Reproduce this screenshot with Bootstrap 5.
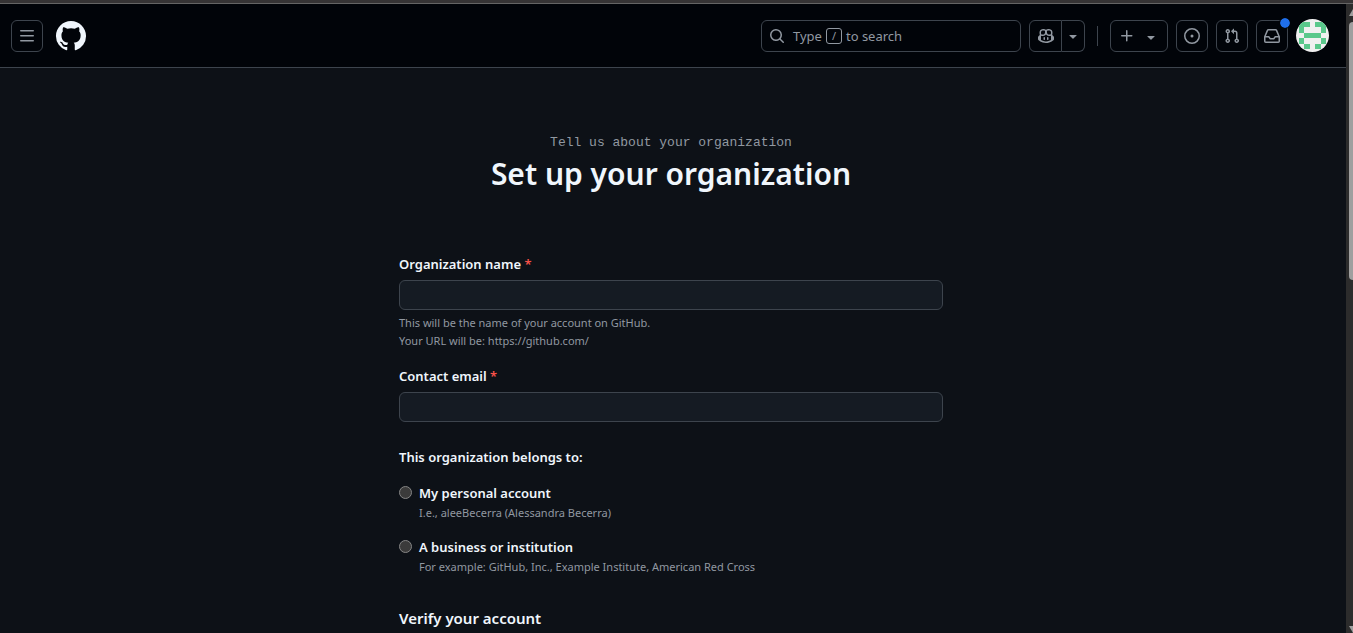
<!DOCTYPE html>
<html lang="en">
<head>
<meta charset="utf-8">
<meta name="viewport" content="width=device-width, initial-scale=1">
<title>Set up your organization</title>
<link href="https://cdn.jsdelivr.net/npm/bootstrap@5.3.0/dist/css/bootstrap.min.css" rel="stylesheet">
<style>
:root { --line: #3d444d; --muted: #9198a1; --fg: #f0f6fc; }
body { background: #0d1117; color: var(--fg); font: 14px/20px "Noto Sans", "Open Sans", sans-serif; }
svg { display: block; fill: currentColor; }
.window-edge { height: 4px; background: #363435; border-bottom: 1px solid #656565; }
.topbar { height: 64px; background: #010409; border-bottom: 1px solid var(--line); padding: 0 17px 0 11px; gap: 8px; }
.tool { height: 32px; min-width: 32px; padding: 0; border: 1px solid var(--line); border-radius: 6px; background: transparent; color: var(--muted); display: flex; align-items: center; justify-content: center; }
.search { width: 260px; padding: 0 7px; justify-content: flex-start; font-size: 13px; }
.slash { width: 16px; height: 16px; border: 1px solid var(--muted); border-radius: 3px; margin: 0 4px; font-size: 11px; line-height: 14px; text-align: center; }
.copilot .tool:first-child { border-radius: 6px 0 0 6px; width: 33px; }
.copilot .tool:last-child { border-radius: 0 6px 6px 0; border-left: 0; min-width: 23px; }
.divider { width: 1px; height: 20px; background: var(--line); margin: 0 4px; }
.create { width: 58px; gap: 8px; }
.dot { width: 10px; height: 10px; top: -3px; right: -3px; border-radius: 50%; background: #1f6feb; outline: 1px solid #010409; }
.avatar { width: 33px; height: 33px; border-radius: 50%; overflow: hidden; }
.setup { max-width: 544px; padding-top: 64px; }
.eyebrow { font: 13px/21px "Liberation Mono", monospace; color: var(--muted); }
h1 { font-size: 30px; line-height: 42px; font-weight: 600; margin-bottom: 59px; }
.field-label { display: block; font-size: 13px; line-height: 21px; font-weight: 600; margin-bottom: 5px; }
.required { color: #f85149; }
.text-field { height: 30px; background: #151b23; border: 1px solid var(--line); border-radius: 6px; color: var(--fg); padding: 4px 12px; }
.text-field:focus { background: #151b23; color: var(--fg); }
.hint { font-size: 11px; line-height: 18px; color: var(--muted); }
.owner { margin-top: 25px; }
.owner legend { margin-bottom: 15px; }
.choice { gap: 7px; margin-bottom: 15px; }
.choice input { appearance: none; width: 13px; height: 13px; flex: none; margin: 3px 0 0; border: 1px solid #858585; border-radius: 50%; background: #3b3b3b; }
.choice input:checked { background: #4493f8; }
.choice label { display: block; font-size: 13px; line-height: 21px; font-weight: 600; }
h2 { font-size: 15px; line-height: 22px; font-weight: 600; margin: 0; }
.scroll-track { width: 7px; background: #2c2c2c; }
.scroll-thumb { height: 41%; margin: 6px 0 0 3px; background: #9f9f9f; border-radius: 4px 0 0 4px; }
.arrow { width: 4px; height: 7px; margin-left: 3px; background: #9f9f9f; }
.arrow-up { margin-top: 5px; clip-path: polygon(100% 0, 100% 100%, 0 100%); }
.arrow-down { clip-path: polygon(0 0, 100% 0, 100% 100%); }
</style>
</head>
<body>
<div class="vh-100 overflow-hidden d-flex flex-column">
  <div class="window-edge flex-shrink-0"></div>
  <div class="d-flex flex-grow-1 overflow-hidden">
    <div class="flex-grow-1 overflow-hidden">
      <header class="topbar d-flex align-items-center">
        <button class="tool" aria-label="Open menu"><svg width="16" height="16" viewBox="0 0 16 16"><path d="M1 2.75A.75.75 0 0 1 1.75 2h12.500a.75.75 0 0 1 0 1.500H1.750A.75.75 0 0 1 1 2.750Zm0 5A.75.75 0 0 1 1.750 7h12.500a.75.75 0 0 1 0 1.500H1.750A.75.75 0 0 1 1 7.750ZM1.750 12h12.500a.75.75 0 0 1 0 1.500H1.750a.75.75 0 0 1 0-1.500Z"/></svg></button>
        <a href="#" class="ms-1 me-auto text-reset" aria-label="Homepage"><svg width="32" height="32" viewBox="-.5 -.5 17 17"><path d="M8 0c4.420 0 8 3.580 8 8a8.013 8.013 0 0 1-5.450 7.590c-.4.080-.55-.17-.55-.38 0-.27.010-1.130.010-2.200 0-.75-.25-1.230-.54-1.480 1.780-.2 3.650-.88 3.650-3.950 0-.88-.31-1.590-.82-2.150.080-.2.360-1.020-.08-2.120 0 0-.67-.22-2.200.820-.64-.18-1.320-.27-2-.27-.68 0-1.360.090-2 .27-1.530-1.030-2.200-.82-2.200-.82-.44 1.100-.16 1.920-.08 2.120-.51.560-.82 1.280-.82 2.150 0 3.060 1.860 3.750 3.640 3.950-.23.200-.44.550-.51 1.070-.46.210-1.610.550-2.330-.66-.15-.24-.6-.83-1.230-.82-.67.010-.27.380.010.530.340.190.730.900.820 1.130.160.450.680 1.310 2.690.940 0 .67.010 1.300.010 1.490 0 .21-.15.450-.55.380A7.995 7.995 0 0 1 0 8c0-4.420 3.580-8 8-8Z"/></svg></a>
        <button class="tool search"><svg class="me-2" width="16" height="16" viewBox="0 0 16 16"><path d="M10.680 11.740a6 6 0 0 1-7.922-8.982 6 6 0 0 1 8.982 7.922l3.040 3.040a.749.749 0 0 1-.326 1.275.749.749 0 0 1-.734-.215ZM11.500 7a4.499 4.499 0 1 0-8.997 0A4.499 4.499 0 0 0 11.500 7Z"/></svg>Type <span class="slash">/</span> to search</button>
        <div class="copilot d-flex">
          <button class="tool" aria-label="Chat with Copilot"><svg width="16" height="16" viewBox="0 0 16 16"><path d="M7.998 15.035c-4.562 0-7.873-2.914-7.998-3.749V9.338c.085-.628.677-1.686 1.588-2.065.013-.07.024-.143.036-.218.029-.183.060-.384.126-.612-.201-.508-.254-1.084-.254-1.656 0-.87.128-1.769.693-2.484.579-.733 1.494-1.124 2.724-1.261 1.206-.134 2.262.034 2.944.765.050.053.096.108.139.165.044-.057.094-.112.143-.165.682-.731 1.738-.899 2.944-.765 1.230.137 2.145.528 2.724 1.261.566.715.693 1.614.693 2.484 0 .572-.053 1.148-.254 1.656.066.228.098.429.126.612.012.076.024.148.037.218.924.385 1.522 1.471 1.591 2.095v1.872c0 .766-3.351 3.795-8.002 3.795Zm0-1.485c2.280 0 4.584-1.110 5.002-1.433V7.862l-.023-.116c-.49.210-1.075.291-1.727.291-1.146 0-2.059-.327-2.710-.991A3.222 3.222 0 0 1 8 6.303a3.240 3.240 0 0 1-.544.743c-.65.664-1.563.991-2.710.991-.652 0-1.236-.081-1.727-.291l-.023.116v4.255c.419.323 2.722 1.433 5.002 1.433ZM6.762 2.830c-.193-.206-.637-.413-1.682-.297-1.019.113-1.479.404-1.713.7-.247.312-.369.789-.369 1.554 0 .793.129 1.171.308 1.371.162.181.519.379 1.442.379.853 0 1.339-.235 1.638-.54.315-.322.527-.827.617-1.553.117-.935-.037-1.395-.241-1.614Zm4.155-.297c-1.044-.116-1.488.091-1.681.297-.204.219-.359.679-.242 1.614.091.726.303 1.231.618 1.553.299.305.784.540 1.638.540.922 0 1.280-.198 1.442-.379.179-.2.308-.578.308-1.371 0-.765-.123-1.242-.37-1.554-.233-.296-.693-.587-1.713-.7Z"/><path d="M6.250 9.037a.75.75 0 0 1 .75.75v1.501a.75.75 0 0 1-1.500 0V9.787a.75.75 0 0 1 .75-.75Zm4.250.75v1.501a.75.75 0 0 1-1.500 0V9.787a.75.75 0 0 1 1.500 0Z"/></svg></button>
          <button class="tool" aria-label="Copilot options"><svg width="16" height="16" viewBox="0 0 16 16"><path d="m4.427 7.427 3.396 3.396a.25.25 0 0 0 .354 0l3.396-3.396A.25.25 0 0 0 11.396 7H4.604a.25.25 0 0 0-.177.427Z"/></svg></button>
        </div>
        <span class="divider"></span>
        <button class="tool create" aria-label="Create new"><svg width="16" height="16" viewBox="0 0 16 16"><path d="M7.750 2a.75.75 0 0 1 .75.75V7h4.250a.75.75 0 0 1 0 1.500H8.500v4.250a.75.75 0 0 1-1.500 0V8.500H2.750a.75.75 0 0 1 0-1.500H7V2.750A.75.75 0 0 1 7.750 2Z"/></svg><svg width="16" height="16" viewBox="0 0 16 16"><path d="m4.427 8.427 3.396 3.396a.25.25 0 0 0 .354 0l3.396-3.396A.25.25 0 0 0 11.396 8H4.604a.25.25 0 0 0-.177.427Z"/></svg></button>
        <button class="tool" aria-label="Issues"><svg width="16" height="16" viewBox="0 0 16 16"><path d="M8 9.500a1.500 1.500 0 1 0 0-3 1.500 1.500 0 0 0 0 3Z"/><path d="M8 0a8 8 0 1 1 0 16A8 8 0 0 1 8 0ZM1.500 8a6.500 6.500 0 1 0 13 0 6.500 6.500 0 0 0-13 0Z"/></svg></button>
        <button class="tool" aria-label="Pull requests"><svg width="16" height="16" viewBox="0 0 16 16"><path d="M1.500 3.250a2.250 2.250 0 1 1 3 2.122v5.256a2.251 2.251 0 1 1-1.500 0V5.372A2.250 2.250 0 0 1 1.500 3.250Zm5.677-.177L9.573.677A.25.25 0 0 1 10 .854V2.500h1A2.500 2.500 0 0 1 13.500 5v5.628a2.251 2.251 0 1 1-1.500 0V5a1 1 0 0 0-1-1h-1v1.646a.25.25 0 0 1-.427.177L7.177 3.427a.25.25 0 0 1 0-.354ZM3.750 2.500a.75.75 0 1 0 0 1.500.75.75 0 0 0 0-1.500Zm0 9.500a.75.75 0 1 0 0 1.500.75.75 0 0 0 0-1.500Zm8.250.75a.75.75 0 1 0 1.500 0 .75.75 0 0 0-1.500 0Z"/></svg></button>
        <button class="tool position-relative" aria-label="Notifications"><svg width="16" height="16" viewBox="0 0 16 16"><path d="M2.800 2.060A1.750 1.750 0 0 1 4.410 1h7.180c.7 0 1.333.417 1.610 1.060l2.740 6.395c.04.093.060.194.060.295v4.500A1.750 1.750 0 0 1 14.250 15H1.750A1.750 1.750 0 0 1 0 13.250v-4.500c0-.101.020-.202.060-.295Zm1.610.440a.25.25 0 0 0-.23.152L1.887 8H4.750a.75.75 0 0 1 .6.3L6.625 10h2.750l1.275-1.700a.75.75 0 0 1 .6-.3h2.863L11.820 2.652a.25.25 0 0 0-.23-.152Zm10.090 7h-2.875l-1.275 1.700a.75.75 0 0 1-.6.3h-3.500a.75.75 0 0 1-.6-.3L4.375 9.500H1.500v3.750c0 .138.112.25.25.25h12.500a.25.25 0 0 0 .25-.25Z"/></svg><span class="dot position-absolute"></span></button>
        <a href="#" class="avatar" aria-label="Your profile"><svg width="33" height="33" viewBox="0 0 33 33" shape-rendering="crispEdges"><path fill="#f0f0f0" d="M0 0h33v33H0z"/><path fill="#5ac88b" d="M3 3h11v5H8v6H3zM19 3h11v11h-5V8h-6zM8 14h17v5H8zM3 19h5v6H3zM25 19h5v6h-5zM8 25h6v5H8zM19 25h6v5h-6z"/></svg></a>
      </header>
      <main class="pe-1">
        <form class="setup mx-auto">
          <div class="eyebrow text-center">Tell us about your organization</div>
          <h1 class="text-center">Set up your organization</h1>
          <label class="field-label" for="org">Organization name <span class="required">*</span></label>
          <input class="form-control text-field" id="org" type="text" required>
          <div class="hint mt-1">This will be the name of your account on GitHub.<br>Your URL will be: https://github.com/</div>
          <label class="field-label mt-3" for="email">Contact email <span class="required">*</span></label>
          <input class="form-control text-field" id="email" type="email" required>
          <fieldset class="owner">
            <legend class="field-label">This organization belongs to:</legend>
            <div class="choice d-flex">
              <input type="radio" name="owner" id="personal">
              <div><label for="personal">My personal account</label><div class="hint">I.e., aleeBecerra (Alessandra Becerra)</div></div>
            </div>
            <div class="choice d-flex">
              <input type="radio" name="owner" id="business">
              <div><label for="business">A business or institution</label><div class="hint">For example: GitHub, Inc., Example Institute, American Red Cross</div></div>
            </div>
          </fieldset>
          <h2 class="pt-3">Verify your account</h2>
        </form>
      </main>
    </div>
    <div class="scroll-track flex-shrink-0 d-flex flex-column" aria-hidden="true">
      <div class="arrow arrow-up"></div>
      <div class="scroll-thumb"></div>
      <div class="arrow arrow-down mt-auto"></div>
    </div>
  </div>
</div>
<script src="https://cdn.jsdelivr.net/npm/bootstrap@5.3.0/dist/js/bootstrap.bundle.min.js"></script>
</body>
</html>
